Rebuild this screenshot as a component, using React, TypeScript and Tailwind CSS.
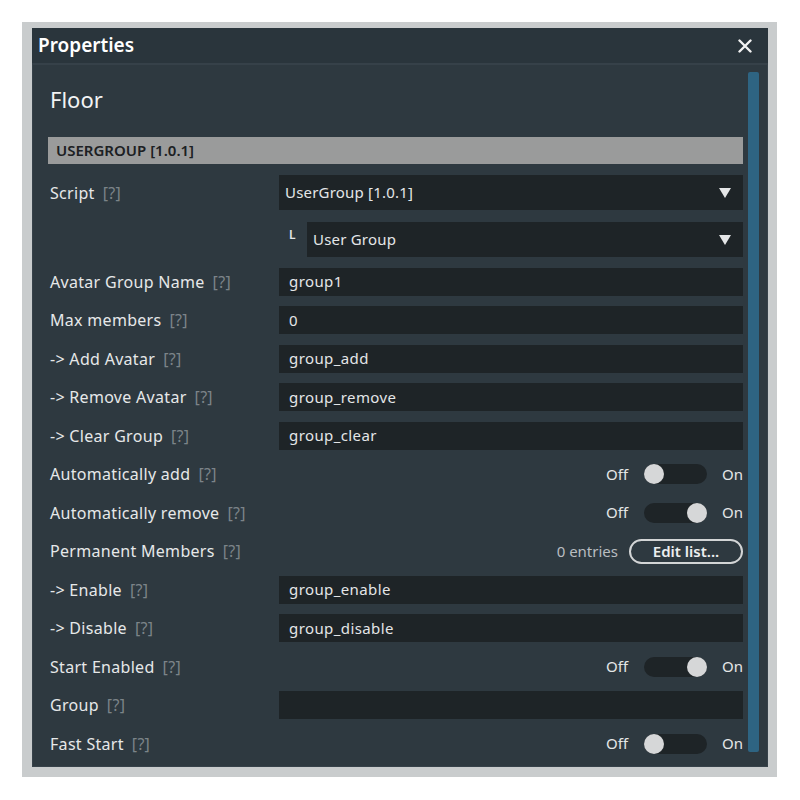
import type { ReactNode } from 'react';

type Row =
  | { kind: 'input'; label: string; value: string }
  | { kind: 'toggle'; label: string; on: boolean }
  | { kind: 'list'; label: string; count: string };

const ROWS: Row[] = [
  { kind: 'input', label: 'Avatar Group Name', value: 'group1' },
  { kind: 'input', label: 'Max members', value: '0' },
  { kind: 'input', label: '-> Add Avatar', value: 'group_add' },
  { kind: 'input', label: '-> Remove Avatar', value: 'group_remove' },
  { kind: 'input', label: '-> Clear Group', value: 'group_clear' },
  { kind: 'toggle', label: 'Automatically add', on: false },
  { kind: 'toggle', label: 'Automatically remove', on: true },
  { kind: 'list', label: 'Permanent Members', count: '0 entries' },
  { kind: 'input', label: '-> Enable', value: 'group_enable' },
  { kind: 'input', label: '-> Disable', value: 'group_disable' },
  { kind: 'toggle', label: 'Start Enabled', on: true },
  { kind: 'input', label: 'Group', value: '' },
  { kind: 'toggle', label: 'Fast Start', on: false },
];

function Label({ text }: { text?: string }) {
  if (!text) return <div className="w-[231px] shrink-0" />;
  return (
    <div className="w-[231px] shrink-0 pl-[2px] text-[16px] tracking-[0.3px] text-[#e6e8e9]">
      {text}
      <span className="ml-[8px] text-[#7c8489]">[?]</span>
    </div>
  );
}

function Caret() {
  return (
    <svg width="12" height="10" viewBox="0 0 12 10" aria-hidden>
      <polygon points="0,0 12,0 6,10" fill="#e4e6e7" />
    </svg>
  );
}

function Select({ value }: { value: string }) {
  return (
    <div className="flex h-[35px] flex-1 items-center justify-between bg-[#1e2427] pl-[6px] pr-[12px] text-[15px] tracking-[0.2px] text-[#e4e6e7]">
      <span>{value}</span>
      <Caret />
    </div>
  );
}

function Toggle({ on }: { on: boolean }) {
  return (
    <div className="flex flex-1 items-center justify-end text-[15px] text-[#e4e6e7]">
      <span>Off</span>
      <div
        className={`ml-[16px] mr-[15px] flex h-[20px] w-[63px] rounded-full bg-[#1e2427] ${
          on ? 'justify-end' : 'justify-start'
        }`}
      >
        <div className="h-[20px] w-[20px] rounded-full bg-[#d6d7d8]" />
      </div>
      <span>On</span>
    </div>
  );
}

function Line({ label, children }: { label?: string; children: ReactNode }) {
  return (
    <div className="mt-[10.5px] flex h-[28px] items-center">
      <Label text={label} />
      {children}
    </div>
  );
}

export default function App() {
  return (
    <div className="min-h-screen bg-white p-[22px] font-['Noto_Sans',sans-serif]">
      <div className="h-[755px] w-[755px] bg-[#c9cccd] pb-[10px] pl-[10px] pr-[9px] pt-[6px]">
        <div className="flex h-full w-full flex-col bg-[#2a353c]">
          {/* title bar */}
          <div className="flex h-[37px] shrink-0 items-center justify-between border-b-2 border-[#364149] pl-[6px] pr-[16px]">
            <span className="text-[19px] font-semibold text-white">Properties</span>
            <svg width="14" height="14" viewBox="0 0 14 14" aria-hidden>
              <path d="M1.5 1.5L12.5 12.5M12.5 1.5L1.5 12.5" stroke="#f2f2f2" strokeWidth="2.4" strokeLinecap="round" />
            </svg>
          </div>

          {/* body */}
          <div className="flex min-h-0 flex-1 border border-t-0 border-[#37424a] bg-[#2e3940]">
            <div className="flex-1 pl-[15px] pt-[21px]">
              <div className="pl-[2px] text-[22px] leading-[26px] text-[#f2f3f4]">Floor</div>

              <div className="mt-[25px] flex h-[27px] items-center bg-[#9a9b9b] pl-[8px] text-[15px] font-semibold text-[#1c2023]">
                USERGROUP [1.0.1]
              </div>

              <div className="mt-[11px] flex items-center">
                <Label text="Script" />
                <Select value="UserGroup [1.0.1]" />
              </div>
              <div className="mt-[12px] flex items-center">
                <Label />
                <span className="mb-[10px] w-[28px] shrink-0 pl-[10px] text-[12px] font-semibold text-[#e4e6e7]">L</span>
                <Select value="User Group" />
              </div>

              {ROWS.map((r) => (
                <Line key={r.label} label={r.label}>
                  {r.kind === 'input' && (
                    <div className="flex h-[28px] flex-1 items-center bg-[#1e2427] pl-[10px] text-[15px] tracking-[0.4px] text-[#e4e6e7]">
                      {r.value}
                    </div>
                  )}
                  {r.kind === 'toggle' && <Toggle on={r.on} />}
                  {r.kind === 'list' && (
                    <div className="flex flex-1 items-center justify-end text-[15px]">
                      <span className="text-[#b9bdc0]">{r.count}</span>
                      <button
                        type="button"
                        className="ml-[11px] flex h-[25px] w-[114px] items-center justify-center rounded-full border-2 border-[#d3d5d6] font-semibold text-[#eceeef]"
                      >
                        Edit list...
                      </button>
                    </div>
                  )}
                </Line>
              ))}
            </div>

            {/* scrollbar */}
            <div className="ml-[5px] mr-[8px] w-[11px] shrink-0 pb-[14px] pt-[7px]">
              <div className="h-full w-full rounded-[2px] bg-[#2e6482]" />
            </div>
          </div>
        </div>
      </div>
    </div>
  );
}
